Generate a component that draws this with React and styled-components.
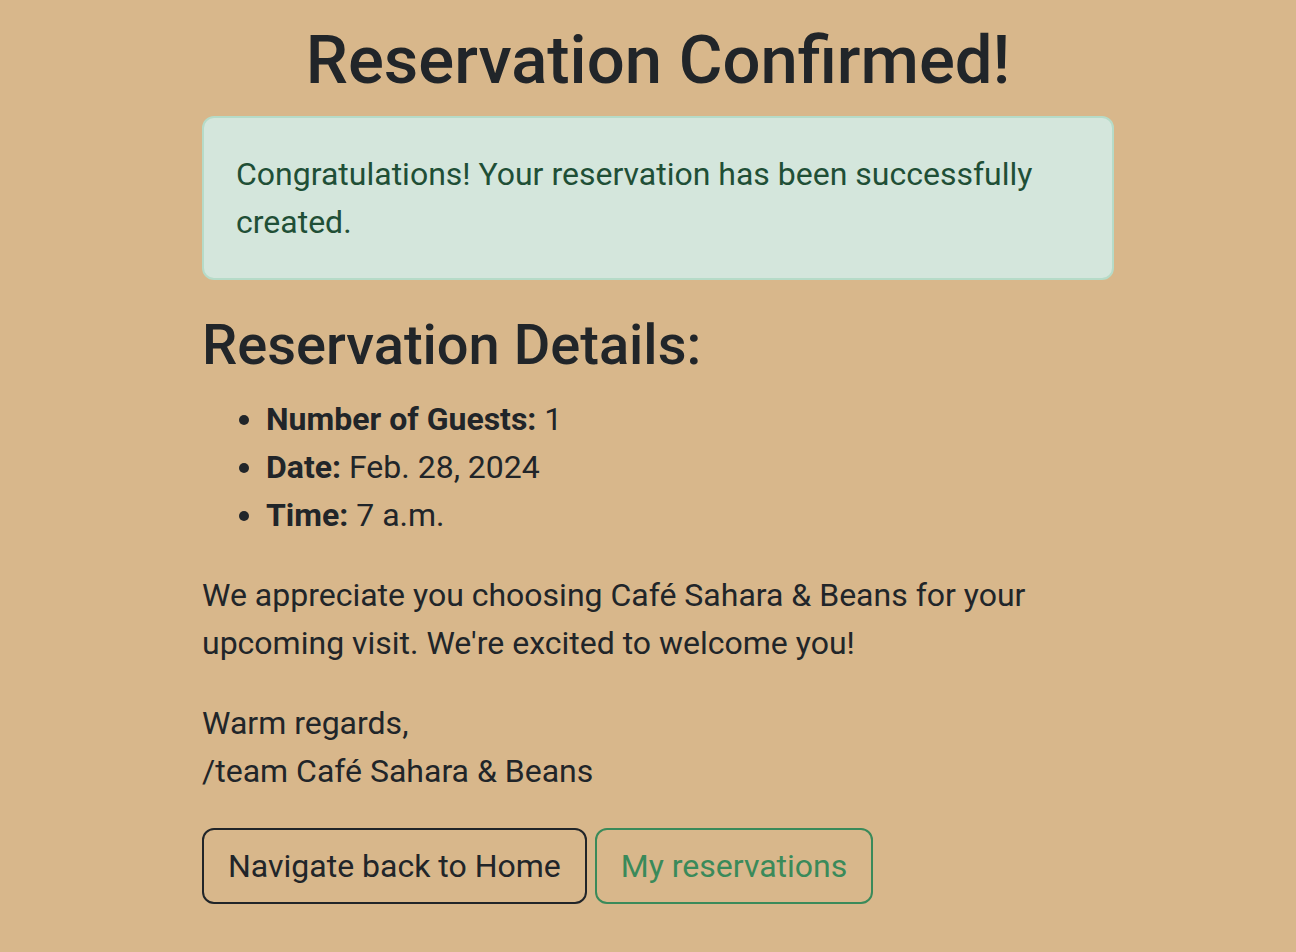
import React from "react";
import styled, { createGlobalStyle } from "styled-components";

const GlobalStyle = createGlobalStyle`
  * {
    box-sizing: border-box;
  }

  body {
    margin: 0;
    background-color: #d8b78b;
    color: #212529;
    font-family: Roboto, "Liberation Sans", sans-serif;
    font-size: 32px;
    line-height: 48px;
  }
`;

const Page = styled.main`
  padding-left: 20px;
`;

const Container = styled.div`
  width: 912px;
  margin: 0 auto;
  padding-top: 21px;
`;

const Title = styled.h1`
  margin: 0 0 16px;
  font-size: 67px;
  font-weight: 500;
  line-height: 1.18;
  text-align: center;
`;

const Alert = styled.div`
  margin-bottom: 32px;
  padding: 32px;
  background-color: #d4e6dc;
  border: 2px solid #b6dbc8;
  border-radius: 12px;
  color: #1f4f36;
`;

const SubTitle = styled.h2`
  margin: 0 0 16px;
  font-size: 56px;
  font-weight: 500;
  line-height: 1.2;
`;

const DetailList = styled.ul`
  margin: 0 0 32px;
  padding-left: 64px;

  strong {
    font-weight: 700;
  }
`;

const Paragraph = styled.p`
  margin: 0 0 32px;
`;

const Actions = styled.div`
  display: flex;
  gap: 8px;
  padding-top: 1px;
`;

const Button = styled.button`
  padding: 12px 24px;
  background: transparent;
  border: 2px solid ${(p) => (p.$variant === "success" ? "#3a8a5a" : "#212529")};
  border-radius: 12px;
  color: ${(p) => (p.$variant === "success" ? "#3a8a5a" : "#212529")};
  font-family: inherit;
  font-size: 32px;
  line-height: 48px;
  cursor: pointer;
`;

const App = () => {
  return (
    <Page>
      <GlobalStyle />
      <Container>
        <Title>Reservation Confirmed!</Title>
        <Alert>Congratulations! Your reservation has been successfully created.</Alert>
        <SubTitle>Reservation Details:</SubTitle>
        <DetailList>
          <li>
            <strong>Number of Guests:</strong> 1
          </li>
          <li>
            <strong>Date:</strong> Feb. 28, 2024
          </li>
          <li>
            <strong>Time:</strong> 7 a.m.
          </li>
        </DetailList>
        <Paragraph>
          We appreciate you choosing Café Sahara &amp; Beans for your upcoming visit. We're excited
          to welcome you!
        </Paragraph>
        <Paragraph>
          Warm regards,
          <br />
          /team Café Sahara &amp; Beans
        </Paragraph>
        <Actions>
          <Button>Navigate back to Home</Button>
          <Button $variant="success">My reservations</Button>
        </Actions>
      </Container>
    </Page>
  );
};

export default App;
